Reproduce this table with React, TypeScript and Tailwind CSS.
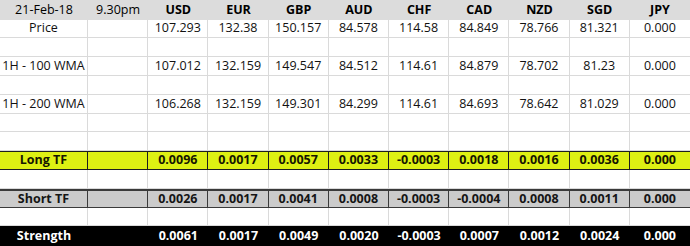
import React from 'react';

type Kind = 'head' | 'plain' | 'long' | 'short' | 'strength';

type Row = {
  kind: Kind;
  h: string;
  cells: string[];
};

const currencies = ['USD', 'EUR', 'GBP', 'AUD', 'CHF', 'CAD', 'NZD', 'SGD', 'JPY'];
const blank = Array(11).fill('');

const rows: Row[] = [
  { kind: 'head', h: 'h-[20px]', cells: ['21-Feb-18', '9.30pm', ...currencies] },
  { kind: 'plain', h: 'h-[18px]', cells: ['Price', '', '107.293', '132.38', '150.157', '84.578', '114.58', '84.849', '78.766', '81.321', '0.000'] },
  { kind: 'plain', h: 'h-[19px]', cells: blank },
  { kind: 'plain', h: 'h-[19px]', cells: ['1H - 100 WMA', '', '107.012', '132.159', '149.547', '84.512', '114.61', '84.879', '78.702', '81.23', '0.000'] },
  { kind: 'plain', h: 'h-[19px]', cells: blank },
  { kind: 'plain', h: 'h-[19px]', cells: ['1H - 200 WMA', '', '106.268', '132.159', '149.301', '84.299', '114.61', '84.693', '78.642', '81.029', '0.000'] },
  { kind: 'plain', h: 'h-[18px]', cells: blank },
  { kind: 'plain', h: 'h-[19px]', cells: blank },
  { kind: 'long', h: 'h-[19px]', cells: ['Long TF', '', '0.0096', '0.0017', '0.0057', '0.0033', '-0.0003', '0.0018', '0.0016', '0.0036', '0.000'] },
  { kind: 'plain', h: 'h-[19px]', cells: blank },
  { kind: 'short', h: 'h-[19px]', cells: ['Short TF', '', '0.0026', '0.0017', '0.0041', '0.0008', '-0.0003', '-0.0004', '0.0008', '0.0011', '0.000'] },
  { kind: 'plain', h: 'h-[18px]', cells: blank },
  { kind: 'strength', h: 'h-[20px]', cells: ['Strength', '', '0.0061', '0.0017', '0.0049', '0.0020', '-0.0003', '0.0007', '0.0012', '0.0024', '0.000'] },
];

const rowStyle: Record<Kind, string> = {
  head: 'bg-[#dcdcdc] text-black',
  plain: 'bg-white text-[#111]',
  long: 'bg-[#def013] text-[#161600] font-bold border-y border-[#1e1e1e]',
  short: 'bg-[#cbcbcb] text-[#151515] font-bold border-t-2 border-b border-[#3a3a3a]',
  strength: 'bg-black text-white font-bold',
};

// vertical gridline between columns, not after the last one
const cellRight: Record<Kind, string> = {
  head: '',
  plain: 'border-r border-[#dadada]',
  long: 'border-r border-[#1e1e1e]',
  short: 'border-r border-[#3a3a3a]',
  strength: '',
};

export default function App() {
  return (
    <div className="w-[690px] h-[246px] overflow-hidden bg-white font-['Open_Sans',sans-serif] text-[12.5px] leading-none">
      {rows.map((row, i) => (
        <div key={i} className={`grid grid-cols-[88px_repeat(10,1fr)] ${row.h} ${rowStyle[row.kind]}`}>
          {row.cells.map((c, j) => (
            <div
              key={j}
              className={`flex items-center justify-center whitespace-nowrap ${
                row.kind === 'plain' ? 'border-b border-b-[#dadada]' : ''
              } ${j === 10 ? '' : cellRight[row.kind]} ${row.kind === 'head' && j > 1 ? 'font-bold' : ''}`}
            >
              {c}
            </div>
          ))}
        </div>
      ))}
    </div>
  );
}
